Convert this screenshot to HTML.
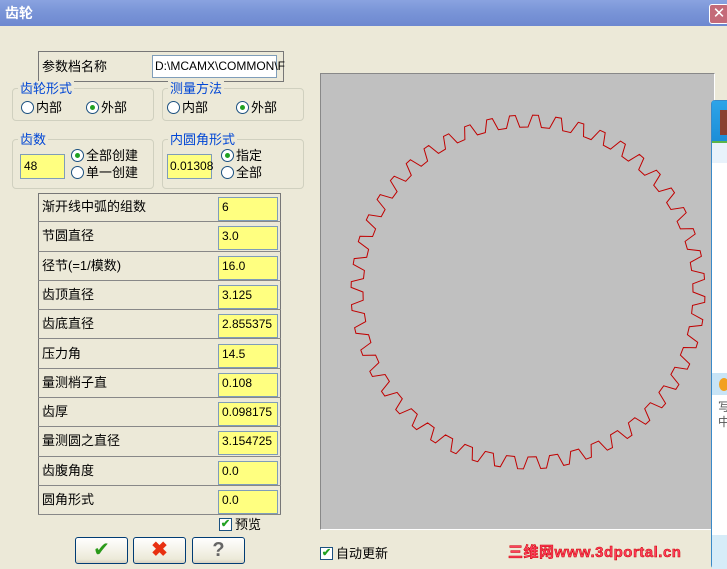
<!DOCTYPE html>
<html><head><meta charset="utf-8"><style>
*{margin:0;padding:0;box-sizing:border-box}
body{width:727px;height:569px;background:#ece9d8;position:relative;overflow:hidden;font-family:"Liberation Sans","Noto Sans CJK SC",sans-serif;font-size:12px;color:#000;line-height:15px}
.a{position:absolute}
.title{left:0;top:0;width:727px;height:26px;background:linear-gradient(#8aa3e0,#7b96d8 40%,#6d88d0);color:#fff;font-weight:bold;font-size:14px;padding:5px 5px;line-height:16px}
.close{left:709px;top:4px;width:20px;height:20px;background:#c46a78;border:1px solid #fff;border-radius:3px;color:#fff;font-size:15px;line-height:17px;text-align:center}
.grp{border:1px solid #d0d0bf;border-radius:4px}
.lg{color:#0046d5;background:#ece9d8;padding:0 2px;font-size:13px}
.rad{width:13px;height:13px;border:1px solid #1c5180;border-radius:50%;background:#fff}
.rad.on::after{content:"";position:absolute;left:3px;top:3px;width:5px;height:5px;border-radius:50%;background:#21a121}
.in{background:#ffff80;border:1px solid #7f9db9;padding:4px 3px;height:25px;line-height:15px}
.row{left:38px;width:243px;height:29.3px;border-bottom:1px solid #888}
.btn{height:27px;width:53px;border:1px solid #003c74;border-radius:3px;background:linear-gradient(#fff,#ece9d8 85%,#d6d0c0);text-align:center}
.chk{width:13px;height:13px;border:1px solid #1c5180;background:#fff;color:#21a121;font-size:11px;line-height:11px;text-align:center;font-weight:bold}
</style></head><body>
<div class="a title">齿轮</div>
<div class="a close">✕</div>

<div class="a" style="left:38px;top:51px;width:246px;height:31px;border:1px solid #777"></div>
<div class="a" style="left:42px;top:59px;font-size:13px">参数档名称</div>
<div class="a" style="left:152px;top:55px;width:125px;height:23px;background:#fff;border:1px solid #7f9db9;padding:3px 2px;font-size:12px">D:\MCAMX\COMMON\F</div>

<div class="a grp" style="left:12px;top:88px;width:142px;height:33px"></div>
<div class="a lg" style="left:18px;top:81px">齿轮形式</div>
<div class="a rad" style="left:21px;top:101px"></div><div class="a" style="left:36px;top:100px;font-size:13px">内部</div>
<div class="a rad on" style="left:86px;top:101px"></div><div class="a" style="left:101px;top:100px;font-size:13px">外部</div>

<div class="a grp" style="left:162px;top:88px;width:142px;height:33px"></div>
<div class="a lg" style="left:168px;top:81px">测量方法</div>
<div class="a rad" style="left:167px;top:101px"></div><div class="a" style="left:182px;top:100px;font-size:13px">内部</div>
<div class="a rad on" style="left:236px;top:101px"></div><div class="a" style="left:251px;top:100px;font-size:13px">外部</div>

<div class="a grp" style="left:12px;top:139px;width:142px;height:50px"></div>
<div class="a lg" style="left:18px;top:132px">齿数</div>
<div class="a in" style="left:20px;top:154px;width:45px">48</div>
<div class="a rad on" style="left:71px;top:149px"></div><div class="a" style="left:86px;top:148px;font-size:13px">全部创建</div>
<div class="a rad" style="left:71px;top:166px"></div><div class="a" style="left:86px;top:165px;font-size:13px">单一创建</div>

<div class="a grp" style="left:162px;top:139px;width:142px;height:50px"></div>
<div class="a lg" style="left:168px;top:132px">内圆角形式</div>
<div class="a in" style="left:167px;top:154px;width:45px;padding:4px 2px">0.01308</div>
<div class="a rad on" style="left:221px;top:149px"></div><div class="a" style="left:236px;top:148px;font-size:13px">指定</div>
<div class="a rad" style="left:221px;top:166px"></div><div class="a" style="left:236px;top:165px;font-size:13px">全部</div>

<div class="a" style="left:38px;top:193px;width:243px;height:322px;border:1px solid #777;border-bottom:none"></div>
<div id="rows"></div>

<div class="a chk" style="left:219px;top:518px">✔</div><div class="a" style="left:235px;top:517px;font-size:13px">预览</div>
<div class="a btn" style="left:75px;top:537px;color:#2a9a1a;font-size:20px;line-height:24px">✔</div>
<div class="a btn" style="left:133px;top:537px;color:#e83010;font-size:20px;line-height:24px;font-weight:bold">✖</div>
<div class="a btn" style="left:192px;top:537px;color:#666;font-size:20px;line-height:24px;font-weight:bold">?</div>

<div class="a" style="left:320px;top:73px;width:395px;height:457px;background:#c0c0c0;border-left:1px solid #888;border-top:1px solid #888;border-right:1px solid #fff;border-bottom:1px solid #fff"></div>
<svg class="a" style="left:320px;top:73px" width="395" height="457"><path id="g" fill="none" stroke="#c00000" stroke-width="1"/></svg>

<div class="a chk" style="left:320px;top:547px">✔</div><div class="a" style="left:336px;top:546px;font-size:13px">自动更新</div>
<div class="a" style="left:508px;top:545px;color:#ff4060;font-weight:bold;font-size:15px;letter-spacing:0.5px;-webkit-text-stroke:0.5px #c00">三维网www.3dportal.cn</div>

<div class="a" style="left:711px;top:100px;width:20px;height:469px;background:#fff;border:1px solid #3a8ac8;border-radius:4px 0 0 4px"></div>
<div class="a" style="left:712px;top:101px;width:15px;height:40px;background:linear-gradient(#2ea4e8,#1b8ed8)"></div>
<div class="a" style="left:720px;top:110px;width:7px;height:25px;background:#8a4030"></div>
<div class="a" style="left:712px;top:141px;width:15px;height:22px;background:#e8f2fb;border-top:2px solid #5ab54a"></div>
<div class="a" style="left:712px;top:373px;width:15px;height:22px;background:#c8e4f6"></div>
<div class="a" style="left:719px;top:378px;width:10px;height:13px;border-radius:50%;background:#f2a020"></div>
<div class="a" style="left:718px;top:400px;color:#555;font-size:12px">写<br>中</div>
<div class="a" style="left:712px;top:535px;width:15px;height:34px;background:#d6ecf8"></div>
<script>
var names=["渐开线中弧的组数","节圆直径","径节(=1/模数)","齿顶直径","齿底直径","压力角","量测梢子直","齿厚","量测圆之直径","齿腹角度","圆角形式"];
var vals=["6","3.0","16.0","3.125","2.855375","14.5","0.108","0.098175","3.154725","0.0","0.0"];
var h="";
for(var i=0;i<11;i++){var t=193+i*29.3;
h+='<div class="a row" style="top:'+t+'px"></div>';
h+='<div class="a" style="left:42px;top:'+(t+6)+'px;font-size:13px">'+names[i]+'</div>';
h+='<div class="a in" style="left:218px;top:'+(t+4)+'px;width:60px;height:24px;padding-top:2px">'+vals[i]+'</div>';}
document.getElementById("rows").innerHTML=h;
var cx=208,cy=219,R=177,r=165,N=48,d="";
for(var k=0;k<N;k++){var a0=k*2*Math.PI/N,s=2*Math.PI/N;
var pts=[[r,a0],[R,a0+s*0.2],[R,a0+s*0.45],[r,a0+s*0.62],[r,a0+s]];
pts.forEach(function(p,j){var x=cx+p[0]*Math.cos(p[1]),y=cy+p[0]*Math.sin(p[1]);d+=(k==0&&j==0?"M":"L")+x.toFixed(1)+" "+y.toFixed(1)+" ";});}
document.getElementById("g").setAttribute("d",d+"Z");
</script>
</body></html>
